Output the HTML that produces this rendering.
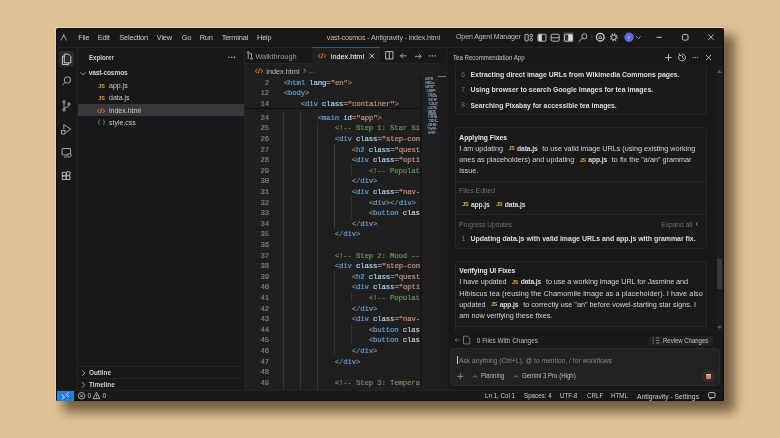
<!DOCTYPE html>
<html><head><meta charset="utf-8">
<style>
*{box-sizing:border-box;margin:0;padding:0}
html,body{width:780px;height:438px;overflow:hidden;background:#dfc294;font-family:"Liberation Sans",sans-serif}
.a{position:absolute;white-space:pre;line-height:1}
svg.a{overflow:visible}
#win{position:absolute;left:56px;top:28px;width:668px;height:373px;background:#181818;border-radius:1.5px 1.5px 1px 1px;box-shadow:9px 9px 11px 2px rgba(20,12,0,0.53);border:1px solid #0e1013}
.t{color:#cccccc}
.menu{font-size:7.4px;letter-spacing:-0.2px;color:#cccccc;top:33.6px}
.code{font-family:"Liberation Mono",monospace;font-size:7.4px;letter-spacing:-0.185px;-webkit-text-stroke:0.18px currentColor;color:#cccccc;left:283.8px}
.ln{font-family:"Liberation Mono",monospace;font-size:7.4px;letter-spacing:-0.185px;-webkit-text-stroke:0.15px currentColor;color:#858585;text-align:right;width:30px;left:238.9px}
.p{color:#8a8a8a}.tg{color:#62a0d6}.at{color:#a4d8f5}.s{color:#c8957c}.c{color:#6a9158}.eq{color:#cccccc}
.guide{position:absolute;width:1px;background:#333}
.bd{position:absolute;background:#262626}
.js{font-family:"Liberation Sans";font-weight:bold;color:#e2a93a;font-size:5.4px;letter-spacing:-0.15px}
.body{font-size:7.2px;color:#d4d4d4}
.chip{font-weight:bold}
.card{position:absolute;border:1px solid #252525;border-radius:2px;background:#1a1a1a}
</style></head><body>
<div id="root" style="position:absolute;left:0;top:0;width:780px;height:438px;will-change:transform">
<div id="win"></div>
<div class="a" style="left:55px;top:29px;width:1px;height:372px;background:#ead3a8"></div>
<div class="a" style="left:57px;top:27px;width:666px;height:1px;background:#e9d6b4"></div>
<!-- ================= title bar ================= -->
<div class="bd" style="left:57px;top:47px;width:666px;height:1px;background:#232323"></div>
<svg class="a" style="left:60.3px;top:33.6px" width="7.5" height="7.5" viewBox="0 0 9 9"><defs><linearGradient id="lg" x1="0" y1="0" x2="0" y2="1"><stop offset="0" stop-color="#f0c040"/><stop offset="0.3" stop-color="#e05050"/><stop offset="0.55" stop-color="#5b8cf0"/><stop offset="1" stop-color="#4a7ae0"/></linearGradient></defs><path d="M1.2 7.2 L4.5 1.6 L7.8 7.2" fill="none" stroke="url(#lg)" stroke-width="1.5" stroke-linecap="round"/></svg>
<div class="a menu" style="left:78.2px">File</div>
<div class="a menu" style="left:97.7px">Edit</div>
<div class="a menu" style="left:119.3px">Selection</div>
<div class="a menu" style="left:156.8px">View</div>
<div class="a menu" style="left:181.7px">Go</div>
<div class="a menu" style="left:199.7px">Run</div>
<div class="a menu" style="left:221.7px">Terminal</div>
<div class="a menu" style="left:257px">Help</div>
<div class="a menu" style="left:326.7px;font-size:7.2px;letter-spacing:-0.15px;color:#bdbdbd">vast-cosmos - Antigravity - index.html</div>
<div class="a menu" style="left:456px;font-size:7.1px;letter-spacing:-0.15px;color:#bdbdbd">Open Agent Manager</div>
<!-- layout icons -->
<svg class="a" style="left:522px;top:30px" width="200" height="16" viewBox="0 0 200 16" fill="none" stroke="#c5c5c5" stroke-width="0.9">
  <rect x="3" y="4.3" width="3.2" height="6.6" rx="0.6"/><rect x="8" y="4.3" width="2.6" height="2.6" rx="1.2"/><rect x="8" y="8.3" width="2.6" height="2.6" rx="1.2"/>
  <rect x="16" y="4.2" width="8" height="7" rx="1"/><rect x="16.4" y="4.6" width="3" height="6.2" fill="#e0e0e0" stroke="none"/><line x1="19.5" y1="4.2" x2="19.5" y2="11.2"/>
  <rect x="29.2" y="4.2" width="8" height="7" rx="1"/><line x1="29.2" y1="7.8" x2="37.2" y2="7.8"/>
  <rect x="40.8" y="1.8" width="11.2" height="10.8" rx="1.5" fill="#333" stroke="none"/>
  <rect x="42.5" y="4.2" width="8" height="7" rx="1"/><rect x="47" y="4.6" width="3.1" height="6.2" fill="#e0e0e0" stroke="none"/><line x1="46.5" y1="4.2" x2="46.5" y2="11.2"/>
  <circle cx="62.3" cy="6.3" r="2.6"/><line x1="60.4" y1="8.2" x2="56.6" y2="11.8"/>
  <line x1="70" y1="4" x2="70" y2="11" stroke="#3a3a3a"/>
  <circle cx="78.3" cy="7.2" r="3.8" stroke="#d8d8d8" stroke-width="1.3"/><path d="M76.6 8.4 L78.3 5.5 L80 8.4 Z" stroke="#b8b8b8" stroke-width="0.9"/>
  <circle cx="91.8" cy="7.3" r="3.3" stroke="#bdbdbd" stroke-width="1.3" stroke-dasharray="1.3 1.27"/><circle cx="91.8" cy="7.3" r="2.3" stroke="#bdbdbd" stroke-width="1"/>
  <circle cx="107" cy="7.3" r="4.7" fill="#5f6cd2" stroke="none"/><text x="107" y="8.9" font-size="4.4" fill="#c5c9f2" stroke="none" text-anchor="middle" font-family="Liberation Sans">E</text>
  <path d="M114.3 6.3 L116.5 8.5 L118.7 6.3" stroke="#aaa"/>
  <line x1="134.5" y1="7.3" x2="140" y2="7.3" stroke="#d0d0d0"/>
  <rect x="160.4" y="4.5" width="5.6" height="5.6" rx="1.2" stroke="#d0d0d0"/>
  <path d="M186.3 4.5 L191.7 9.9 M191.7 4.5 L186.3 9.9" stroke="#d0d0d0"/>
</svg>

<!-- ================= activity bar ================= -->
<div class="bd" style="left:77px;top:48px;width:1px;height:342px;background:#232323"></div>
<div class="a" style="left:59px;top:51px;width:15px;height:16px;background:#2a2a2a;border-radius:2.5px"></div>
<svg class="a" style="left:56px;top:48px" width="21" height="140" viewBox="0 0 21 140" fill="none" stroke="#b8b8b8" stroke-width="0.9">
  <path d="M8.3 6.2 h4.2 l2.3 2.3 v6.3 h-6.5 z" stroke="#d8d8d8"/><path d="M8.3 8.2 h-1.8 v8.3 h6 v-1.7" stroke="#d8d8d8"/>
  <circle cx="11.5" cy="32" r="3.2"/><line x1="9.2" y1="34.3" x2="6.3" y2="37.3"/>
  <circle cx="8" cy="53.8" r="1.2"/><circle cx="8" cy="62" r="1.2"/><circle cx="13" cy="56" r="1.2"/><path d="M8 55 v5.8 M13 57.2 c0 2.5 -5 2 -5 3.6"/>
  <path d="M7.8 81 V76.6 L14.8 81.2 L10 84.4"/><rect x="5.6" y="82.4" width="3.4" height="3.6"/>
  <rect x="6" y="100.5" width="8.6" height="6.4" rx="0.6"/><circle cx="13.3" cy="107.3" r="1.8" fill="#181818"/><line x1="8" y1="109" x2="11" y2="109"/>
  <rect x="6.3" y="124.3" width="3.8" height="3.6"/><rect x="6.3" y="127.9" width="3.8" height="3.6"/><rect x="10.1" y="127.9" width="3.8" height="3.6"/><rect x="10.6" y="123.8" width="3.4" height="3.4" transform="rotate(20 12.3 125.5)"/>
</svg>

<!-- ================= sidebar ================= -->
<div class="a t" style="left:88.7px;top:54.4px;font-size:7px;font-weight:bold;color:#cfcfcf;transform:scaleX(0.877);transform-origin:0 0">Explorer</div>
<svg class="a" style="left:225px;top:52px" width="14" height="10"><circle cx="4" cy="5.2" r="0.7" fill="#ccc"/><circle cx="6.8" cy="5.2" r="0.7" fill="#ccc"/><circle cx="9.6" cy="5.2" r="0.7" fill="#ccc"/></svg>
<svg class="a" style="left:78px;top:68px" width="10" height="10" fill="none" stroke="#c0c0c0" stroke-width="0.8"><path d="M2.4 4.2 L5 6.8 L7.6 4.2"/></svg>
<div class="a t" style="left:88.7px;top:70.1px;font-size:6.7px;letter-spacing:-0.18px;font-weight:bold;color:#cfcfcf">vast-cosmos</div>
<div class="a" style="left:78px;top:104px;width:166.5px;height:12px;background:#37373d"></div>
<div class="a js" style="left:98.3px;top:84px">JS</div>
<div class="a js" style="left:98.3px;top:96px">JS</div>
<svg class="a" style="left:97.3px;top:107.6px" width="8" height="6" fill="none" stroke="#e37933" stroke-width="0.95"><path d="M2.2 0.8 L0.4 2.9 L2.2 5 M5.8 0.8 L7.6 2.9 L5.8 5 M4.7 0.5 L3.3 5.3"/></svg>
<svg class="a" style="left:97.5px;top:119.3px" width="8" height="7" fill="none" stroke="#519aba" stroke-width="0.8"><path d="M1.8 0.6 C0.8 0.6 1.2 3.2 0.4 3.2 C1.2 3.2 0.8 5.8 1.8 5.8 M5.2 0.6 C6.2 0.6 5.8 3.2 6.6 3.2 C5.8 3.2 6.2 5.8 5.2 5.8"/></svg>
<div class="a t" style="left:109px;top:82.2px;font-size:7px">app.js</div>
<div class="a t" style="left:109px;top:94.3px;font-size:7px">data.js</div>
<div class="a t" style="left:109px;top:106.6px;font-size:7px">index.html</div>
<div class="a t" style="left:109px;top:118.9px;font-size:7px">style.css</div>
<div class="bd" style="left:78px;top:366.2px;width:166px;height:1px;background:#222"></div>
<div class="bd" style="left:78px;top:378.4px;width:166px;height:1px;background:#222"></div>
<svg class="a" style="left:78px;top:367.5px" width="10" height="22" fill="none" stroke="#c0c0c0" stroke-width="0.75"><path d="M4 2.2 L6.8 5 L4 7.8 M4 14 L6.8 16.8 L4 19.6"/></svg>
<div class="a t" style="left:88.8px;top:370px;font-size:7.1px;font-weight:bold;color:#cfcfcf;transform:scaleX(0.9);transform-origin:0 0">Outline</div>
<div class="a t" style="left:88.8px;top:381.8px;font-size:7.1px;font-weight:bold;color:#cfcfcf;transform:scaleX(0.9);transform-origin:0 0">Timeline</div>

<!-- ================= editor ================= -->
<div class="bd" style="left:244px;top:48px;width:1px;height:342px;background:#232323"></div>
<div class="a" style="left:245px;top:63px;width:201px;height:327px;background:#1f1f1f"></div>
<div class="a" style="left:245px;top:62.5px;width:67px;height:1px;background:#262626"></div>
<div class="a" style="left:311.5px;top:48px;width:1px;height:15px;background:#262626"></div>
<div class="a" style="left:312px;top:47px;width:68px;height:16px;background:#1f1f1f;border-top:1px solid #33567c"></div>
<div class="a" style="left:380px;top:62.5px;width:66px;height:1px;background:#262626"></div>
<div class="a" style="left:380px;top:48px;width:66px;height:14.5px;background:#181818"></div>
<svg class="a" style="left:245px;top:48px" width="201" height="16" fill="none" stroke="#bbbbbb" stroke-width="0.8">
  <circle cx="3.3" cy="4.5" r="0.9"/><path d="M3.3 5.5 v5.5"/><circle cx="6.5" cy="10.6" r="0.9"/><path d="M6.5 9.6 v-4 h-2"/>
  <path d="M140.6 3.6 h7.4 v7.4 h-7.4 z M144.3 3.6 v7.4" stroke="#c5c5c5" stroke-width="0.9"/>
  <path d="M161.7 7.9 h-6 M158 5.4 l-2.5 2.5 l2.5 2.5" stroke="#c5c5c5"/>
  <path d="M170 8.3 h6 M173.8 5.8 l2.5 2.5 l-2.5 2.5" stroke="#c5c5c5"/>
</svg>
<svg class="a" style="left:420px;top:48px" width="26" height="16"><circle cx="9.5" cy="7.9" r="0.7" fill="#ccc"/><circle cx="12.3" cy="7.9" r="0.7" fill="#ccc"/><circle cx="15.1" cy="7.9" r="0.7" fill="#ccc"/></svg>
<div class="a t" style="left:255.4px;top:52.6px;font-size:7.4px;color:#9d9d9d">Walkthrough</div>
<svg class="a" style="left:318.3px;top:53.2px" width="8" height="6" fill="none" stroke="#e37933" stroke-width="0.95"><path d="M2.2 0.8 L0.4 2.9 L2.2 5 M5.8 0.8 L7.6 2.9 L5.8 5 M4.7 0.5 L3.3 5.3"/></svg>
<div class="a t" style="left:330.8px;top:52.6px;font-size:7.3px;color:#ffffff">index.html</div>
<svg class="a" style="left:367px;top:51px" width="10" height="10" fill="none" stroke="#dddddd" stroke-width="0.9"><path d="M2.6 2.8 L7 7.2 M7 2.8 L2.6 7.2"/></svg>
<svg class="a" style="left:254.8px;top:68px" width="8" height="6" fill="none" stroke="#e37933" stroke-width="0.95"><path d="M2.2 0.8 L0.4 2.9 L2.2 5 M5.8 0.8 L7.6 2.9 L5.8 5 M4.7 0.5 L3.3 5.3"/></svg>
<div class="a t" style="left:266.3px;top:67.5px;font-size:7.3px;color:#bdbdbd">index.html</div>
<svg class="a" style="left:300px;top:66px" width="20" height="10" fill="none" stroke="#a9a9a9" stroke-width="0.8"><path d="M3.8 2.8 L5.8 4.8 L3.8 6.8"/><circle cx="9.6" cy="6.8" r="0.45" fill="#a9a9a9" stroke="none"/><circle cx="11.6" cy="6.8" r="0.45" fill="#a9a9a9" stroke="none"/><circle cx="13.6" cy="6.8" r="0.45" fill="#a9a9a9" stroke="none"/></svg>
<!-- code -->
<div class="a" style="left:245px;top:76px;width:201px;height:314px;overflow:hidden">
 <div class="a" style="left:-245px;top:-76px;width:421px;height:390px;overflow:hidden">
<div class="guide" style="left:283.0px;top:111.7px;height:286.2px;background:#363636"></div><div class="guide" style="left:300.0px;top:111.7px;height:286.2px;background:#363636"></div><div class="guide" style="left:317.0px;top:122.3px;height:275.6px;background:#363636"></div><div class="guide" style="left:334.1px;top:143.5px;height:84.8px;background:#404040"></div><div class="guide" style="left:351.1px;top:164.7px;height:10.6px;background:#333"></div><div class="guide" style="left:351.1px;top:196.5px;height:21.2px;background:#333"></div><div class="guide" style="left:334.1px;top:270.7px;height:84.8px;background:#333"></div><div class="guide" style="left:351.1px;top:291.9px;height:10.6px;background:#333"></div><div class="guide" style="left:351.1px;top:323.7px;height:21.2px;background:#333"></div><div class="a ln" style="top:114.70px">24</div><div class="a code" style="top:114.70px">        <span class="p">&lt;</span><span class="tg">main</span> <span class="at">id</span><span class="eq">=</span><span class="s">&quot;app&quot;</span><span class="p">&gt;</span></div><div class="a ln" style="top:125.30px">25</div><div class="a code" style="top:125.30px">            <span class="c">&lt;!-- Step 1: Star Si</span></div><div class="a ln" style="top:135.90px">26</div><div class="a code" style="top:135.90px">            <span class="p">&lt;</span><span class="tg">div</span> <span class="at">class</span><span class="eq">=</span><span class="s">&quot;step-con</span></div><div class="a ln" style="top:146.50px">27</div><div class="a code" style="top:146.50px">                <span class="p">&lt;</span><span class="tg">h2</span> <span class="at">class</span><span class="eq">=</span><span class="s">&quot;quest</span></div><div class="a ln" style="top:157.10px">28</div><div class="a code" style="top:157.10px">                <span class="p">&lt;</span><span class="tg">div</span> <span class="at">class</span><span class="eq">=</span><span class="s">&quot;opti</span></div><div class="a ln" style="top:167.70px">29</div><div class="a code" style="top:167.70px">                    <span class="c">&lt;!-- Populat</span></div><div class="a ln" style="top:178.30px">30</div><div class="a code" style="top:178.30px">                <span class="p">&lt;/</span><span class="tg">div</span><span class="p">&gt;</span></div><div class="a ln" style="top:188.90px">31</div><div class="a code" style="top:188.90px">                <span class="p">&lt;</span><span class="tg">div</span> <span class="at">class</span><span class="eq">=</span><span class="s">&quot;nav-</span></div><div class="a ln" style="top:199.50px">32</div><div class="a code" style="top:199.50px">                    <span class="p">&lt;</span><span class="tg">div</span><span class="p">&gt;</span><span class="p">&lt;/</span><span class="tg">div</span><span class="p">&gt;</span></div><div class="a ln" style="top:210.10px">33</div><div class="a code" style="top:210.10px">                    <span class="p">&lt;</span><span class="tg">button</span> clas</div><div class="a ln" style="top:220.70px">34</div><div class="a code" style="top:220.70px">                <span class="p">&lt;/</span><span class="tg">div</span><span class="p">&gt;</span></div><div class="a ln" style="top:231.30px">35</div><div class="a code" style="top:231.30px">            <span class="p">&lt;/</span><span class="tg">div</span><span class="p">&gt;</span></div><div class="a ln" style="top:241.90px">36</div><div class="a code" style="top:241.90px"></div><div class="a ln" style="top:252.50px">37</div><div class="a code" style="top:252.50px">            <span class="c">&lt;!-- Step 2: Mood --</span></div><div class="a ln" style="top:263.10px">38</div><div class="a code" style="top:263.10px">            <span class="p">&lt;</span><span class="tg">div</span> <span class="at">class</span><span class="eq">=</span><span class="s">&quot;step-con</span></div><div class="a ln" style="top:273.70px">39</div><div class="a code" style="top:273.70px">                <span class="p">&lt;</span><span class="tg">h2</span> <span class="at">class</span><span class="eq">=</span><span class="s">&quot;quest</span></div><div class="a ln" style="top:284.30px">40</div><div class="a code" style="top:284.30px">                <span class="p">&lt;</span><span class="tg">div</span> <span class="at">class</span><span class="eq">=</span><span class="s">&quot;opti</span></div><div class="a ln" style="top:294.90px">41</div><div class="a code" style="top:294.90px">                    <span class="c">&lt;!-- Populat</span></div><div class="a ln" style="top:305.50px">42</div><div class="a code" style="top:305.50px">                <span class="p">&lt;/</span><span class="tg">div</span><span class="p">&gt;</span></div><div class="a ln" style="top:316.10px">43</div><div class="a code" style="top:316.10px">                <span class="p">&lt;</span><span class="tg">div</span> <span class="at">class</span><span class="eq">=</span><span class="s">&quot;nav-</span></div><div class="a ln" style="top:326.70px">44</div><div class="a code" style="top:326.70px">                    <span class="p">&lt;</span><span class="tg">button</span> clas</div><div class="a ln" style="top:337.30px">45</div><div class="a code" style="top:337.30px">                    <span class="p">&lt;</span><span class="tg">button</span> clas</div><div class="a ln" style="top:347.90px">46</div><div class="a code" style="top:347.90px">                <span class="p">&lt;/</span><span class="tg">div</span><span class="p">&gt;</span></div><div class="a ln" style="top:358.50px">47</div><div class="a code" style="top:358.50px">            <span class="p">&lt;/</span><span class="tg">div</span><span class="p">&gt;</span></div><div class="a ln" style="top:369.10px">48</div><div class="a code" style="top:369.10px"></div><div class="a ln" style="top:379.70px">49</div><div class="a code" style="top:379.70px">            <span class="c">&lt;!-- Step 3: Tempera</span></div><div class="a ln" style="top:390.30px">50</div><div class="a code" style="top:390.30px">            <span class="p">&lt;</span><span class="tg">div</span> <span class="at">class</span><span class="eq">=</span><span class="s">&quot;step-con</span></div>
 </div>
</div>
<!-- sticky -->
<div class="a" style="left:245px;top:76.5px;width:176px;height:31.5px;background:#1f1f1f;overflow:hidden">
 <div class="a" style="left:-245px;top:-76.5px;width:421px;height:108px">
<div class="a ln" style="top:79.70px">2</div><div class="a code" style="top:79.70px"><span class="p">&lt;</span><span class="tg">html</span> <span class="at">lang</span><span class="eq">=</span><span class="s">&quot;en&quot;</span><span class="p">&gt;</span></div><div class="a ln" style="top:90.20px">12</div><div class="a code" style="top:90.20px"><span class="p">&lt;</span><span class="tg">body</span><span class="p">&gt;</span></div><div class="a ln" style="top:100.70px">14</div><div class="a code" style="top:100.70px">    <span class="p">&lt;</span><span class="tg">div</span> <span class="at">class</span><span class="eq">=</span><span class="s">&quot;container&quot;</span><span class="p">&gt;</span></div>
 </div>
</div>
<div class="a" style="left:245px;top:107.6px;width:176px;height:1.4px;background:#0f0f0f"></div>
<!-- minimap -->
<div class="a" style="left:421px;top:76px;width:17px;height:314px;background:#1f1f1f"></div>
<div class="a" style="left:420.4px;top:76.5px;width:1.2px;height:313.5px;background:#171717"></div>
<div class="a" style="left:424.60px;top:76.80px;width:1.52px;height:1.05px;background:#465a70"></div><div class="a" style="left:426.62px;top:76.80px;width:2.30px;height:1.05px;background:#5d7185"></div><div class="a" style="left:429.43px;top:76.80px;width:3.63px;height:1.05px;background:#7a6858"></div><div class="a" style="left:424.60px;top:78.11px;width:1.27px;height:1.05px;background:#465a70"></div><div class="a" style="left:426.37px;top:78.11px;width:3.07px;height:1.05px;background:#5d7185"></div><div class="a" style="left:429.94px;top:78.11px;width:2.91px;height:1.05px;background:#7a6858"></div><div class="a" style="left:425.35px;top:79.42px;width:1.26px;height:1.05px;background:#465a70"></div><div class="a" style="left:427.11px;top:79.42px;width:3.01px;height:1.05px;background:#5d7185"></div><div class="a" style="left:430.62px;top:79.42px;width:2.09px;height:1.05px;background:#7a6858"></div><div class="a" style="left:425.35px;top:80.73px;width:1.63px;height:1.05px;background:#465a70"></div><div class="a" style="left:427.48px;top:80.73px;width:2.14px;height:1.05px;background:#5d7185"></div><div class="a" style="left:430.12px;top:80.73px;width:2.23px;height:1.05px;background:#7a6858"></div><div class="a" style="left:425.35px;top:82.04px;width:1.62px;height:1.05px;background:#465a70"></div><div class="a" style="left:427.47px;top:82.04px;width:3.65px;height:1.05px;background:#5d7185"></div><div class="a" style="left:431.63px;top:82.04px;width:2.31px;height:1.05px;background:#7a6858"></div><div class="a" style="left:425.35px;top:83.35px;width:1.42px;height:1.05px;background:#465a70"></div><div class="a" style="left:427.27px;top:83.35px;width:3.25px;height:1.05px;background:#5d7185"></div><div class="a" style="left:431.03px;top:83.35px;width:4.37px;height:1.05px;background:#7a6858"></div><div class="a" style="left:424.60px;top:84.66px;width:1.78px;height:1.05px;background:#465a70"></div><div class="a" style="left:426.88px;top:84.66px;width:2.79px;height:1.05px;background:#5d7185"></div><div class="a" style="left:430.17px;top:84.66px;width:4.44px;height:1.05px;background:#7a6858"></div><div class="a" style="left:424.60px;top:85.97px;width:1.25px;height:1.05px;background:#465a70"></div><div class="a" style="left:426.35px;top:85.97px;width:3.72px;height:1.05px;background:#5d7185"></div><div class="a" style="left:430.56px;top:85.97px;width:2.72px;height:1.05px;background:#7a6858"></div><div class="a" style="left:425.35px;top:87.28px;width:1.34px;height:1.05px;background:#465a70"></div><div class="a" style="left:427.19px;top:87.28px;width:2.24px;height:1.05px;background:#5d7185"></div><div class="a" style="left:429.93px;top:87.28px;width:2.77px;height:1.05px;background:#7a6858"></div><div class="a" style="left:426.10px;top:88.59px;width:2.02px;height:1.05px;background:#465a70"></div><div class="a" style="left:428.62px;top:88.59px;width:2.36px;height:1.05px;background:#5d7185"></div><div class="a" style="left:431.48px;top:88.59px;width:3.45px;height:1.05px;background:#7a6858"></div><div class="a" style="left:426.85px;top:89.90px;width:1.84px;height:1.05px;background:#465a70"></div><div class="a" style="left:429.19px;top:89.90px;width:2.74px;height:1.05px;background:#5d7185"></div><div class="a" style="left:432.43px;top:89.90px;width:3.37px;height:1.05px;background:#7a6858"></div><div class="a" style="left:426.10px;top:91.21px;width:1.26px;height:1.05px;background:#465a70"></div><div class="a" style="left:427.86px;top:91.21px;width:2.12px;height:1.05px;background:#5d7185"></div><div class="a" style="left:430.48px;top:91.21px;width:2.51px;height:1.05px;background:#566a80"></div><div class="a" style="left:426.85px;top:92.52px;width:1.88px;height:1.05px;background:#465a70"></div><div class="a" style="left:429.23px;top:92.52px;width:2.86px;height:1.05px;background:#5d7185"></div><div class="a" style="left:432.59px;top:92.52px;width:2.79px;height:1.05px;background:#566a80"></div><div class="a" style="left:427.60px;top:93.83px;width:1.79px;height:1.05px;background:#465a70"></div><div class="a" style="left:429.89px;top:93.83px;width:2.91px;height:1.05px;background:#5d7185"></div><div class="a" style="left:433.29px;top:93.83px;width:2.75px;height:1.05px;background:#566a80"></div><div class="a" style="left:427.60px;top:95.14px;width:1.99px;height:1.05px;background:#465a70"></div><div class="a" style="left:430.09px;top:95.14px;width:3.40px;height:1.05px;background:#5d7185"></div><div class="a" style="left:433.99px;top:95.14px;width:2.61px;height:1.05px;background:#566a80"></div><div class="a" style="left:428.35px;top:96.45px;width:1.77px;height:1.05px;background:#465a70"></div><div class="a" style="left:430.62px;top:96.45px;width:3.05px;height:1.05px;background:#5d7185"></div><div class="a" style="left:434.17px;top:96.45px;width:3.33px;height:1.05px;background:#7a6858"></div><div class="a" style="left:428.35px;top:97.76px;width:1.93px;height:1.05px;background:#465a70"></div><div class="a" style="left:430.78px;top:97.76px;width:2.58px;height:1.05px;background:#5d7185"></div><div class="a" style="left:433.86px;top:97.76px;width:3.64px;height:1.05px;background:#566a80"></div><div class="a" style="left:427.60px;top:99.07px;width:1.32px;height:1.05px;background:#465a70"></div><div class="a" style="left:429.42px;top:99.07px;width:2.84px;height:1.05px;background:#5d7185"></div><div class="a" style="left:432.75px;top:99.07px;width:3.89px;height:1.05px;background:#566a80"></div><div class="a" style="left:428.35px;top:100.38px;width:1.35px;height:1.05px;background:#465a70"></div><div class="a" style="left:430.20px;top:100.38px;width:2.98px;height:1.05px;background:#5d7185"></div><div class="a" style="left:433.68px;top:100.38px;width:2.10px;height:1.05px;background:#566a80"></div><div class="a" style="left:428.35px;top:101.69px;width:1.87px;height:1.05px;background:#465a70"></div><div class="a" style="left:430.72px;top:101.69px;width:3.53px;height:1.05px;background:#5d7185"></div><div class="a" style="left:434.75px;top:101.69px;width:2.75px;height:1.05px;background:#566a80"></div><div class="a" style="left:429.10px;top:103.00px;width:2.08px;height:1.05px;background:#465a70"></div><div class="a" style="left:431.68px;top:103.00px;width:2.63px;height:1.05px;background:#5d7185"></div><div class="a" style="left:434.80px;top:103.00px;width:2.70px;height:1.05px;background:#7a6858"></div><div class="a" style="left:429.10px;top:104.31px;width:1.79px;height:1.05px;background:#465a70"></div><div class="a" style="left:431.39px;top:104.31px;width:3.16px;height:1.05px;background:#5d7185"></div><div class="a" style="left:435.05px;top:104.31px;width:2.45px;height:1.05px;background:#566a80"></div><div class="a" style="left:428.35px;top:105.62px;width:2.04px;height:1.05px;background:#465a70"></div><div class="a" style="left:430.89px;top:105.62px;width:3.89px;height:1.05px;background:#5d7185"></div><div class="a" style="left:435.28px;top:105.62px;width:2.22px;height:1.05px;background:#566a80"></div><div class="a" style="left:427.60px;top:106.93px;width:1.86px;height:1.05px;background:#465a70"></div><div class="a" style="left:429.96px;top:106.93px;width:2.12px;height:1.05px;background:#5d7185"></div><div class="a" style="left:432.59px;top:106.93px;width:3.75px;height:1.05px;background:#566a80"></div><div class="a" style="left:426.85px;top:108.24px;width:1.85px;height:1.05px;background:#465a70"></div><div class="a" style="left:429.20px;top:108.24px;width:3.99px;height:1.05px;background:#5d7185"></div><div class="a" style="left:433.68px;top:108.24px;width:3.82px;height:1.05px;background:#566a80"></div><div class="a" style="left:426.85px;top:109.55px;width:1.48px;height:1.05px;background:#465a70"></div><div class="a" style="left:428.83px;top:109.55px;width:2.77px;height:1.05px;background:#5d7185"></div><div class="a" style="left:432.11px;top:109.55px;width:3.67px;height:1.05px;background:#7a6858"></div><div class="a" style="left:427.60px;top:110.86px;width:1.22px;height:1.05px;background:#465a70"></div><div class="a" style="left:429.32px;top:110.86px;width:2.92px;height:1.05px;background:#5d7185"></div><div class="a" style="left:432.75px;top:110.86px;width:2.42px;height:1.05px;background:#566a80"></div><div class="a" style="left:427.60px;top:112.17px;width:1.32px;height:1.05px;background:#465a70"></div><div class="a" style="left:429.42px;top:112.17px;width:2.12px;height:1.05px;background:#5d7185"></div><div class="a" style="left:432.04px;top:112.17px;width:3.92px;height:1.05px;background:#566a80"></div><div class="a" style="left:428.35px;top:113.48px;width:1.33px;height:1.05px;background:#465a70"></div><div class="a" style="left:430.18px;top:113.48px;width:2.50px;height:1.05px;background:#5d7185"></div><div class="a" style="left:433.17px;top:113.48px;width:2.98px;height:1.05px;background:#566a80"></div><div class="a" style="left:428.35px;top:114.79px;width:2.07px;height:1.05px;background:#465a70"></div><div class="a" style="left:430.92px;top:114.79px;width:2.16px;height:1.05px;background:#5d7185"></div><div class="a" style="left:433.58px;top:114.79px;width:3.12px;height:1.05px;background:#566a80"></div><div class="a" style="left:427.60px;top:116.10px;width:1.75px;height:1.05px;background:#465a70"></div><div class="a" style="left:429.85px;top:116.10px;width:3.77px;height:1.05px;background:#5d7185"></div><div class="a" style="left:434.12px;top:116.10px;width:3.38px;height:1.05px;background:#7a6858"></div><div class="a" style="left:428.35px;top:117.41px;width:2.06px;height:1.05px;background:#465a70"></div><div class="a" style="left:430.91px;top:117.41px;width:2.56px;height:1.05px;background:#5d7185"></div><div class="a" style="left:433.97px;top:117.41px;width:3.04px;height:1.05px;background:#566a80"></div><div class="a" style="left:428.35px;top:118.72px;width:1.56px;height:1.05px;background:#465a70"></div><div class="a" style="left:430.41px;top:118.72px;width:3.77px;height:1.05px;background:#5d7185"></div><div class="a" style="left:434.68px;top:118.72px;width:2.82px;height:1.05px;background:#566a80"></div><div class="a" style="left:429.10px;top:120.03px;width:1.35px;height:1.05px;background:#465a70"></div><div class="a" style="left:430.95px;top:120.03px;width:2.35px;height:1.05px;background:#5d7185"></div><div class="a" style="left:433.80px;top:120.03px;width:2.58px;height:1.05px;background:#566a80"></div><div class="a" style="left:429.10px;top:121.34px;width:1.43px;height:1.05px;background:#465a70"></div><div class="a" style="left:431.03px;top:121.34px;width:2.97px;height:1.05px;background:#5d7185"></div><div class="a" style="left:434.50px;top:121.34px;width:3.00px;height:1.05px;background:#566a80"></div><div class="a" style="left:428.35px;top:122.65px;width:1.46px;height:1.05px;background:#465a70"></div><div class="a" style="left:430.31px;top:122.65px;width:2.01px;height:1.05px;background:#5d7185"></div><div class="a" style="left:432.82px;top:122.65px;width:3.05px;height:1.05px;background:#7a6858"></div><div class="a" style="left:427.60px;top:123.96px;width:1.57px;height:1.05px;background:#465a70"></div><div class="a" style="left:429.67px;top:123.96px;width:3.13px;height:1.05px;background:#5d7185"></div><div class="a" style="left:433.30px;top:123.96px;width:4.20px;height:1.05px;background:#566a80"></div><div class="a" style="left:426.85px;top:125.27px;width:1.89px;height:1.05px;background:#465a70"></div><div class="a" style="left:429.24px;top:125.27px;width:3.03px;height:1.05px;background:#5d7185"></div><div class="a" style="left:432.77px;top:125.27px;width:3.54px;height:1.05px;background:#566a80"></div><div class="a" style="left:426.85px;top:126.58px;width:1.88px;height:1.05px;background:#465a70"></div><div class="a" style="left:429.23px;top:126.58px;width:2.11px;height:1.05px;background:#5d7185"></div><div class="a" style="left:431.83px;top:126.58px;width:4.25px;height:1.05px;background:#566a80"></div><div class="a" style="left:427.60px;top:127.89px;width:1.98px;height:1.05px;background:#465a70"></div><div class="a" style="left:430.08px;top:127.89px;width:3.75px;height:1.05px;background:#5d7185"></div><div class="a" style="left:434.33px;top:127.89px;width:3.17px;height:1.05px;background:#566a80"></div><div class="a" style="left:427.60px;top:129.20px;width:1.59px;height:1.05px;background:#465a70"></div><div class="a" style="left:429.69px;top:129.20px;width:2.80px;height:1.05px;background:#5d7185"></div><div class="a" style="left:432.99px;top:129.20px;width:2.26px;height:1.05px;background:#7a6858"></div><div class="a" style="left:428.35px;top:130.51px;width:1.83px;height:1.05px;background:#465a70"></div><div class="a" style="left:430.68px;top:130.51px;width:2.12px;height:1.05px;background:#5d7185"></div><div class="a" style="left:433.31px;top:130.51px;width:2.17px;height:1.05px;background:#566a80"></div><div class="a" style="left:428.35px;top:131.82px;width:1.41px;height:1.05px;background:#465a70"></div><div class="a" style="left:430.26px;top:131.82px;width:2.32px;height:1.05px;background:#5d7185"></div><div class="a" style="left:433.08px;top:131.82px;width:2.85px;height:1.05px;background:#566a80"></div><div class="a" style="left:427.60px;top:133.13px;width:1.25px;height:1.05px;background:#465a70"></div><div class="a" style="left:429.35px;top:133.13px;width:2.00px;height:1.05px;background:#5d7185"></div><div class="a" style="left:431.85px;top:133.13px;width:2.38px;height:1.05px;background:#566a80"></div>
<div class="a" style="left:437.5px;top:63px;width:8.5px;height:327px;background:#1d1d1d"></div>
<div class="a" style="left:438px;top:76.2px;width:8px;height:1.2px;background:#777"></div>

<!-- ================= right panel ================= -->
<div class="bd" style="left:446px;top:48px;width:1px;height:342px;background:#232323"></div>
<div class="a" style="left:452.7px;top:55.01px;font-size:6.9px;color:#c4c4c4;font-weight:normal;transform:scaleX(0.885);transform-origin:0 0">Tea Recommendation App</div>
<svg class="a" style="left:660px;top:50px" width="60" height="15" fill="none" stroke="#c8c8c8" stroke-width="0.9">
<path d="M8.5 4.2 v6.6 M5.2 7.5 h6.6"/>
<path d="M19.5 5.2 a3.4 3.4 0 1 0 2.4 -1.1" /><path d="M19.3 3.3 v2.2 h2.2" /><path d="M22.5 5.8 v2 l1.3 1"/>
<circle cx="33.2" cy="7.5" r="0.6" fill="#c8c8c8" stroke="none"/><circle cx="35.4" cy="7.5" r="0.6" fill="#c8c8c8" stroke="none"/><circle cx="37.6" cy="7.5" r="0.6" fill="#c8c8c8" stroke="none"/>
<path d="M46 5 L51 10 M51 5 L46 10"/>
</svg>
<div class="a" style="left:447px;top:65px;width:277px;height:266px;overflow:hidden"><div class="a" style="left:-447px;top:-65px;width:780px;height:438px">
<div class="card" style="left:454.5px;top:40px;width:252.5px;height:75px"></div>
<div class="a" style="left:461.2px;top:71.57px;font-size:6.6px;color:#707070;font-weight:normal;">6</div>
<div class="a" style="left:470.5px;top:72.00px;font-size:6.92px;color:#dedede;font-weight:bold;">Extracting direct image URLs from Wikimedia Commons pages.</div>
<div class="a" style="left:461.2px;top:86.92px;font-size:6.6px;color:#707070;font-weight:normal;">7</div>
<div class="a" style="left:470.5px;top:87.35px;font-size:6.91px;color:#dedede;font-weight:bold;">Using browser to search Google Images for tea images.</div>
<div class="a" style="left:461.2px;top:102.27px;font-size:6.6px;color:#707070;font-weight:normal;">8</div>
<div class="a" style="left:470.5px;top:102.77px;font-size:6.79px;color:#dedede;font-weight:bold;">Searching Pixabay for accessible tea images.</div>
<div class="card" style="left:454.5px;top:127px;width:252.5px;height:121.8px"></div>
<div class="a" style="left:455.5px;top:181px;width:250.5px;height:1px;background:#262626"></div>
<div class="a" style="left:455.5px;top:214px;width:250.5px;height:1px;background:#262626"></div>
<div class="a" style="left:459.3px;top:134.61px;font-size:6.71px;color:#e8e8e8;font-weight:bold;">Applying Fixes</div>
<div class="a" style="left:459.3px;top:144.72px;font-size:7.25px;color:#d4d4d4;font-weight:normal;letter-spacing:-0.024px">I am updating<span style="display:inline-block;width:5.5px"></span><span class="js" style="position:relative;top:-0.6px">JS</span><span style="display:inline-block;width:2.4px"></span><span class="chip" style="font-size:6.75px;letter-spacing:-0.12px;color:#dcdcdc">data.js</span><span style="display:inline-block;width:4.7px"></span>to use valid image URLs (using existing working</div>
<div class="a" style="left:459.3px;top:156.12px;font-size:7.25px;color:#d4d4d4;font-weight:normal;">ones as placeholders) and updating<span style="display:inline-block;width:5.5px"></span><span class="js" style="position:relative;top:-0.6px">JS</span><span style="display:inline-block;width:2.4px"></span><span class="chip" style="font-size:6.75px;letter-spacing:-0.12px;color:#dcdcdc">app.js</span><span style="display:inline-block;width:4.7px"></span>to fix the "a/an" grammar</div>
<div class="a" style="left:459.3px;top:166.92px;font-size:7.25px;color:#d4d4d4;font-weight:normal;">issue.</div>
<div class="a" style="left:459.1px;top:187.81px;font-size:6.9px;color:#707070;font-weight:normal;">Files Edited</div>
<div class="a" style="left:459.3px;top:201.05px;font-size:7.2px;color:#d4d4d4;font-weight:normal;"><span style="display:inline-block;width:2.9px"></span><span class="js" style="position:relative;top:-0.6px">JS</span><span style="display:inline-block;width:2.4px"></span><span class="chip" style="font-size:6.75px;letter-spacing:-0.12px;color:#dcdcdc">app.js</span><span style="display:inline-block;width:6.5px"></span><span style="display:inline-block;width:0px"></span><span class="js" style="position:relative;top:-0.6px">JS</span><span style="display:inline-block;width:2.4px"></span><span class="chip" style="font-size:6.75px;letter-spacing:-0.12px;color:#dcdcdc">data.js</span><span style="display:inline-block;width:0px"></span></div>
<div class="a" style="left:459.1px;top:221.57px;font-size:6.6px;color:#707070;font-weight:normal;">Progress Updates</div>
<div class="a" style="left:661.3px;top:221.57px;font-size:6.6px;color:#707070;font-weight:normal;">Expand all</div>
<svg class="a" style="left:692px;top:219px" width="10" height="10" fill="none" stroke="#8a8a8a" stroke-width="0.8"><path d="M6 3 L4 5 L6 7"/></svg>
<div class="a" style="left:461.8px;top:235.77px;font-size:6.6px;color:#707070;font-weight:normal;">1</div>
<div class="a" style="left:470.5px;top:236.39px;font-size:6.94px;color:#dedede;font-weight:bold;">Updating data.js with valid image URLs and app.js with grammar fix.</div>
<div class="card" style="left:454.5px;top:260.8px;width:252.5px;height:120px"></div>
<div class="a" style="left:455.5px;top:325.5px;width:250.5px;height:1px;background:#262626"></div>
<div class="a" style="left:459.3px;top:268.11px;font-size:6.71px;color:#e8e8e8;font-weight:bold;">Verifying UI Fixes</div>
<div class="a" style="left:459.3px;top:278.22px;font-size:7.25px;color:#d4d4d4;font-weight:normal;letter-spacing:-0.055px">I have updated<span style="display:inline-block;width:5.5px"></span><span class="js" style="position:relative;top:-0.6px">JS</span><span style="display:inline-block;width:2.4px"></span><span class="chip" style="font-size:6.75px;letter-spacing:-0.12px;color:#dcdcdc">data.js</span><span style="display:inline-block;width:4.7px"></span>to use a working image URL for Jasmine and</div>
<div class="a" style="left:459.3px;top:289.62px;font-size:7.25px;color:#d4d4d4;font-weight:normal;letter-spacing:0.093px">Hibiscus tea (reusing the Chamomile image as a placeholder). I have also</div>
<div class="a" style="left:459.3px;top:301.02px;font-size:7.25px;color:#d4d4d4;font-weight:normal;">updated<span style="display:inline-block;width:5.5px"></span><span class="js" style="position:relative;top:-0.6px">JS</span><span style="display:inline-block;width:2.4px"></span><span class="chip" style="font-size:6.75px;letter-spacing:-0.12px;color:#dcdcdc">app.js</span><span style="display:inline-block;width:4.7px"></span>to correctly use "an" before vowel-starting star signs. I</div>
<div class="a" style="left:459.3px;top:312.42px;font-size:7.25px;color:#d4d4d4;font-weight:normal;">am now verifying these fixes.</div>
</div></div>
<div class="a" style="left:716.5px;top:66px;width:6px;height:266px;background:#1c1c1c"></div>
<div class="a" style="left:717px;top:258.8px;width:5px;height:30.5px;background:#3a3a3a;border-radius:1px"></div>
<svg class="a" style="left:715px;top:66px" width="9" height="266"><path d="M2 7 L4.5 4 L7 7 Z" fill="#555"/><path d="M2 260 L4.5 263 L7 260 Z" fill="#555"/></svg>
<svg class="a" style="left:450px;top:333px" width="30" height="14" fill="none" stroke="#8a8a8a" stroke-width="0.8">
<path d="M9.8 7 h-4.6 M7.2 5 l-2 2 l2 2" stroke="#707070"/>
<path d="M13.5 3.2 h4 l2.3 2.3 v5.4 h-6.3 z" />
</svg>
<div class="a" style="left:476.8px;top:337.65px;font-size:6.45px;color:#bdbdbd;font-weight:normal;">0 Files With Changes</div>
<div class="a" style="left:648px;top:335.5px;width:64.5px;height:10.5px;background:#222222;border-radius:2px"></div>
<svg class="a" style="left:648px;top:335px" width="16" height="11" fill="none" stroke="#9a9a9a" stroke-width="0.7"><path d="M4.5 3 h1.5 M4.5 5.5 h1.5 M4.5 8 h1.5 M8 3 h3.5 M8 5.5 h3.5 M8 8 h3.5"/></svg>
<div class="a" style="left:662.8px;top:338.16px;font-size:6.8px;color:#c0c0c0;font-weight:normal;transform:scaleX(0.88);transform-origin:0 0">Review Changes</div>
<div class="a" style="left:450.3px;top:348.3px;width:269.5px;height:37.5px;background:#222222;border:1px solid #2a2a2a;border-radius:4px"></div>
<div class="a" style="left:457.3px;top:356.3px;width:0.8px;height:8px;background:#cccccc"></div>
<div class="a" style="left:458.8px;top:357.61px;font-size:6.9px;color:#858585;font-weight:normal;transform:scaleX(0.972);transform-origin:0 0">Ask anything (Ctrl+L), @ to mention, / for workflows</div>
<svg class="a" style="left:450px;top:370px" width="80" height="13" fill="none" stroke="#9a9a9a" stroke-width="0.8">
<path d="M10.3 3.3 v6.2 M7.2 6.4 h6.2"/>
<path d="M23 7.6 L25 5.6 L27 7.6"/>
<path d="M64 7.6 L66 5.6 L68 7.6"/>
</svg>
<div class="a" style="left:480.5px;top:373.41px;font-size:6.9px;color:#bdbdbd;font-weight:normal;transform:scaleX(0.875);transform-origin:0 0">Planning</div>
<div class="a" style="left:521.9px;top:373.41px;font-size:6.9px;color:#bdbdbd;font-weight:normal;transform:scaleX(0.883);transform-origin:0 0">Gemini 3 Pro (High)</div>
<div class="a" style="left:702.3px;top:370px;width:12.6px;height:12.6px;background:#2c2c2c;border-radius:50%"></div>
<div class="a" style="left:705.8px;top:373.5px;width:5.6px;height:5.6px;background:#e57a6a;border-radius:1px"></div>
<div class="a" style="left:706.4px;top:374.2px;width:4.4px;height:1px;background:#f5b3a8"></div>

<!-- ================= status ================= -->
<div class="a" style="left:57px;top:390px;width:666px;height:10px;background:#181818;border-top:1px solid #232323"></div>
<div class="a" style="left:57px;top:390.5px;width:16.5px;height:10px;background:#2a7fd4"></div>
<svg class="a" style="left:57px;top:390px" width="60" height="11" fill="none" stroke="#e8e8e8" stroke-width="0.8">
  <path d="M4.8 4.8 L7.5 7 L4.9 9.1 M11.8 2.3 L9.2 4.6 L11.8 6.8" stroke-width="0.85"/>
  <circle cx="24.6" cy="5.8" r="3.3" stroke="#cccccc" stroke-width="0.75"/><path d="M23.1 4.3 L26.1 7.3 M26.1 4.3 L23.1 7.3" stroke="#cccccc" stroke-width="0.75"/>
  <path d="M39.5 2.2 L43 8.6 L36 8.6 Z M39.5 4.6 v2 M39.5 7.4 v0.4" stroke="#cccccc"/>
</svg>
<div class="a t" style="left:87.6px;top:393px;font-size:6.6px">0</div>
<div class="a t" style="left:102.4px;top:393px;font-size:6.6px">0</div>
<div class="a t" style="left:485px;top:392.6px;font-size:6.9px;transform:scaleX(0.9);transform-origin:0 0">Ln 1, Col 1</div>
<div class="a t" style="left:524.4px;top:392.6px;font-size:6.9px;transform:scaleX(0.9);transform-origin:0 0">Spaces: 4</div>
<div class="a t" style="left:560.3px;top:392.6px;font-size:6.9px;transform:scaleX(0.9);transform-origin:0 0">UTF-8</div>
<div class="a t" style="left:587px;top:392.6px;font-size:6.9px;transform:scaleX(0.9);transform-origin:0 0">CRLF</div>
<div class="a t" style="left:610.5px;top:392.6px;font-size:6.9px;transform:scaleX(0.9);transform-origin:0 0">HTML</div>
<div class="a t" style="left:637px;top:392.6px;font-size:7px;transform:scaleX(0.966);transform-origin:0 0">Antigravity - Settings</div>
<svg class="a" style="left:705px;top:390px" width="14" height="11" fill="none" stroke="#d0d0d0" stroke-width="0.9"><rect x="3.6" y="2.6" width="6.4" height="5" rx="1"/><path d="M5 7.6 v1.6 l1.6 -1.6"/></svg>
</div>
</body></html>
